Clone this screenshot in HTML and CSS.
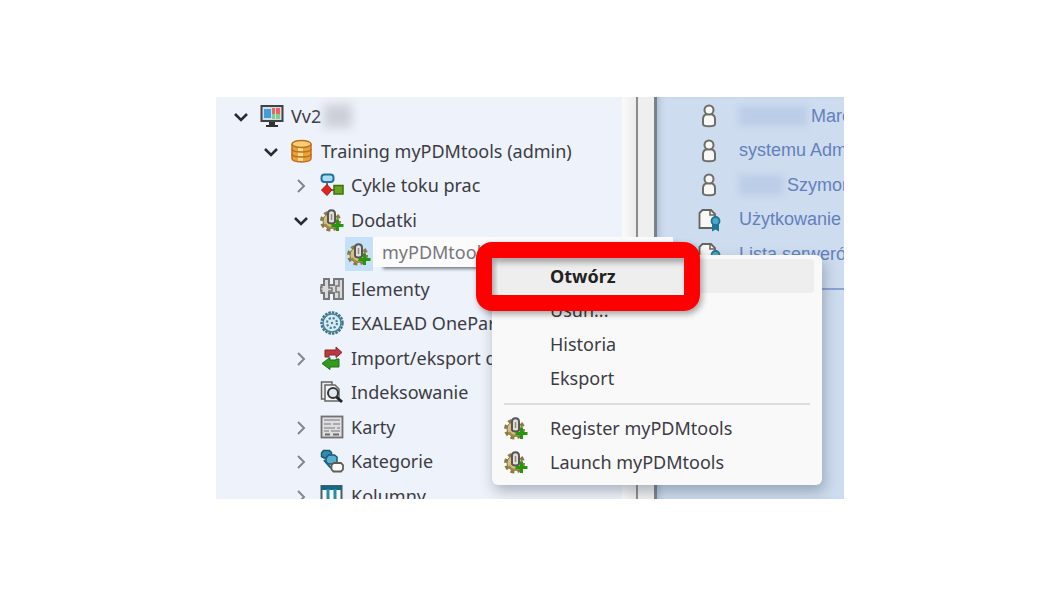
FILE: index.html
```html
<!DOCTYPE html>
<html lang="pl">
<head>
    <meta charset="UTF-8">
    <meta name="viewport" content="width=device-width, initial-scale=1.0">
    <title>myPDMtools</title>
    <link rel="stylesheet" href="styles.css">
</head>
<body>
    <!-- Icons -->
    <svg class="sprite" aria-hidden="true">
        <symbol id="open" viewBox="0 0 24 24"><path d="M6 10l6 6 6-6" fill="none" stroke="#2b2b33" stroke-width="2.6"/></symbol>
        <symbol id="closed" viewBox="0 0 24 24"><path d="M9 7l6 6-6 6" fill="none" stroke="#85858c" stroke-width="2"/></symbol>
        <symbol id="monitor" viewBox="0 0 24 24">
            <rect x="1.5" y="2" width="21" height="15" fill="#d5dde0" stroke="#3f4347" stroke-width="2"/>
            <rect x="4" y="5" width="7" height="9" fill="#3f9fdc"/>
            <rect x="12" y="4" width="8" height="6" fill="#ef6360"/>
            <rect x="12" y="10" width="8" height="5" fill="#7fd18a"/>
            <path d="M15 4h1v11h-1z" fill="#d5dde0"/>
            <path d="M9 18h6v3H9zM6 21h12v2H6z" fill="#2f3236"/>
        </symbol>
        <symbol id="database" viewBox="0 0 24 24">
            <path d="M2 5.5v14c0 4.500 19 4.500 19 0v-14z" fill="#e9a13a" stroke="#bd6f20" stroke-width="1.500"/>
            <path d="M8 8v14h5V8z" fill="#ffdc8c"/>
            <ellipse cx="11.500" cy="5" rx="9.500" ry="3.500" fill="#f8cf72" stroke="#bd6f20" stroke-width="1.500"/>
            <path d="M2 10c0 4 19 4 19 0M2 15c0 4 19 4 19 0" fill="none" stroke="#bd6f20" stroke-width="1.500"/>
        </symbol>
        <symbol id="workflow" viewBox="0 0 24 24">
            <path d="M7 8v9h10" fill="none" stroke="#444" stroke-width="1.500"/>
            <rect x="1.500" y="1.500" width="12" height="7.500" rx="3" fill="#a9dcf7" stroke="#24719c" stroke-width="2"/>
            <path d="M7 11.500l5 5.500-5 5.500L1.500 17z" fill="#e32222" stroke="#a91616"/>
            <rect x="14" y="12.500" width="9" height="8.500" fill="#67a51d" stroke="#3d6f10" stroke-width="1.500"/>
        </symbol>
        <symbol id="addin" viewBox="0 0 24 24">
            <circle cx="10.500" cy="13" r="8.500" fill="none" stroke="#8a7a45" stroke-width="4" stroke-dasharray="3.700 3"/>
            <circle cx="10.500" cy="13" r="7.500" fill="#d3c07a" stroke="#857747"/>
            <path d="M5 16c3 5 8 5 11 0" fill="none" stroke="#a08b45" stroke-width="2"/>
            <path d="M8 14V6c0-5 7-5 7 0v8c-1 2-6 2-7 0z" fill="#e3e0d6" stroke="#55555a" stroke-width="2"/>
            <path d="M11.500 6v6" stroke="#8b8b92" stroke-width="1.500"/>
            <path d="M17.500 11.500v11.500M11.500 17.500h12" stroke="#27960f" stroke-width="3"/>
        </symbol>
        <symbol id="elements" viewBox="0 0 24 24">
            <path d="M4 2h5v6h5V2h9v20h-9v-6H9v6H4v-6H1.500v-2.500H0v-3h1.500V8H4z" fill="#d9d9da" stroke="#77777a" stroke-width="2"/>
            <path d="M19 2v7h-3v6h3v7M9 8v3h3v3H9v2" fill="none" stroke="#77777a" stroke-width="1.500"/>
        </symbol>
        <symbol id="exalead" viewBox="0 0 24 24">
            <circle cx="12" cy="12" r="10.500" fill="none" stroke="#39738a" stroke-width="2.400" stroke-dasharray="2.500 1"/>
            <circle cx="12" cy="12" r="9" fill="#d8edf4" stroke="#4c8298" stroke-width="1.500"/>
            <circle cx="12" cy="12" r="5" fill="none" stroke="#4d8096" stroke-width="2.200" stroke-dasharray="2.200 1.727"/>
            <circle cx="12" cy="12" r="1.200" fill="#4d8096"/>
        </symbol>
        <symbol id="transfer" viewBox="0 0 24 24">
            <path d="M5 4h11V1l6 5.500-6 5V9H9v2H5z" fill="#b83a40" stroke="#8e2328"/>
            <path d="M19 13v8h-9v2.500L2 17.500l8-6V14h6v-1z" fill="#329b1f" stroke="#236f17"/>
        </symbol>
        <symbol id="index" viewBox="0 0 24 24">
            <path d="M5 19H1.500V2H12v3" fill="#ececec" stroke="#666" stroke-width="1.500"/>
            <path d="M5 20V5h10l4 4v12H5z" fill="#f5f5f5" stroke="#666" stroke-width="1.500"/>
            <circle cx="13" cy="13" r="5" fill="#dfe9ee" stroke="#37373a" stroke-width="2"/>
            <path d="M16.500 17l5.500 5" stroke="#242426" stroke-width="3"/>
        </symbol>
        <symbol id="card" viewBox="0 0 24 24">
            <rect x="1.500" y="1.500" width="21" height="21" fill="#dedede" stroke="#717174" stroke-width="1.800"/>
            <path d="M4 5h16M4 9h7M13 9h7M4 13h11M17 13h3M4 16h5M11 16h9" stroke="#9a9a9d" stroke-width="1.500"/>
            <path d="M5 19.500h5M13 19.500h6" stroke="#6b6b6e" stroke-width="2"/>
        </symbol>
        <symbol id="category" viewBox="0 0 24 24">
            <path d="M1.500 4l2-2.500h6l2 2V9H4L1.500 7.500z" fill="#3788ad" stroke="#195a79" stroke-width="1.500"/>
            <path d="M6 9l2.500-3h6l2.500 2v7H8.500L6 13z" fill="#5aaed2" stroke="#195a79" stroke-width="1.500"/>
            <path d="M4 11l7 8" stroke="#1d6789" stroke-width="2"/>
            <path d="M11.500 16.500l2-2.500H21l2 2v4.500L21 22.500h-7.500l-2-2z" fill="#fff" stroke="#5f5f54" stroke-width="1.800"/>
        </symbol>
        <symbol id="columns" viewBox="0 0 24 24">
            <rect x="1.500" y="2" width="20" height="22" fill="#f3fbff" stroke="#4d5b61" stroke-width="2"/>
            <path d="M1 4h21" stroke="#176683" stroke-width="4"/>
            <path d="M8 5v19M15 5v19" stroke="#3189a9" stroke-width="3"/>
        </symbol>
        <symbol id="user" viewBox="0 0 24 24">
            <path d="M6 20v-5c0-4 2-5 6-5s6 1 6 5v5c0 3-12 3-12 0z" fill="#f8f8f6" stroke="#6f6c69" stroke-width="2"/>
            <circle cx="12" cy="6" r="4.500" fill="#f8f8f6" stroke="#6f6c69" stroke-width="2"/>
        </symbol>
        <symbol id="license" viewBox="0 0 24 24">
            <path d="M2.500 5l3-3H14l4 4v14H2.500z" fill="#f8f8f6" stroke="#65625f" stroke-width="1.800"/>
            <path d="M13 2v5h5" fill="none" stroke="#65625f" stroke-width="1.500"/>
            <path d="M15 15h7v8.500l-3.500-2-3.500 2z" fill="#197898"/>
            <circle cx="18.500" cy="13" r="4" fill="#48a9ca" stroke="#25738f" stroke-width="1.800"/>
        </symbol>
    </svg>

    <main class="window">
        <nav class="tree-pane">
            <ul class="tree rows">
                <li class="node"><button class="toggle" aria-label="Zwiń"><svg><use href="#open"/></svg></button><svg class="icon"><use href="#monitor"/></svg><span>Vv2</span><i class="smudge smudge-gray"></i></li>
                <li class="node level-1"><button class="toggle" aria-label="Zwiń"><svg><use href="#open"/></svg></button><svg class="icon"><use href="#database"/></svg><span>Training myPDMtools (admin)</span></li>
                <li class="node level-2"><button class="toggle" aria-label="Rozwiń"><svg><use href="#closed"/></svg></button><svg class="icon"><use href="#workflow"/></svg><span>Cykle toku prac</span></li>
                <li class="node level-2"><button class="toggle" aria-label="Zwiń"><svg><use href="#open"/></svg></button><svg class="icon"><use href="#addin"/></svg><span>Dodatki</span></li>
                <li class="node level-3 selected"><svg class="icon"><use href="#addin"/></svg><span class="tip">myPDMtools</span></li>
                <li class="node level-2 leaf"><svg class="icon"><use href="#elements"/></svg><span>Elementy</span></li>
                <li class="node level-2 leaf"><svg class="icon"><use href="#exalead"/></svg><span>EXALEAD OnePart</span></li>
                <li class="node level-2"><button class="toggle" aria-label="Rozwiń"><svg><use href="#closed"/></svg></button><svg class="icon"><use href="#transfer"/></svg><span>Import/eksport danych</span></li>
                <li class="node level-2 leaf"><svg class="icon"><use href="#index"/></svg><span>Indeksowanie</span></li>
                <li class="node level-2"><button class="toggle" aria-label="Rozwiń"><svg><use href="#closed"/></svg></button><svg class="icon"><use href="#card"/></svg><span>Karty</span></li>
                <li class="node level-2"><button class="toggle" aria-label="Rozwiń"><svg><use href="#closed"/></svg></button><svg class="icon"><use href="#category"/></svg><span>Kategorie</span></li>
                <li class="node level-2"><button class="toggle" aria-label="Rozwiń"><svg><use href="#closed"/></svg></button><svg class="icon"><use href="#columns"/></svg><span>Kolumny</span></li>
            </ul>
        </nav>
        <div class="gutter"></div>
        <div class="splitter"></div>
        <section class="list-pane">
            <ul class="rows">
                <li class="entry"><svg class="icon"><use href="#user"/></svg><i class="smudge smudge-long"></i><a href="#">Marcin</a></li>
                <li class="entry"><svg class="icon"><use href="#user"/></svg><a href="#">systemu Administrator</a></li>
                <li class="entry"><svg class="icon"><use href="#user"/></svg><i class="smudge"></i><a href="#">Szymon</a></li>
                <li class="entry"><svg class="icon"><use href="#license"/></svg><a href="#">Użytkowanie licencji</a></li>
                <li class="entry"><svg class="icon"><use href="#license"/></svg><a href="#">Lista serwerów</a></li>
                <li class="divider"></li>
            </ul>
        </section>

        <!-- Context menu -->
        <div class="menu" role="menu">
            <button class="menu-item active" role="menuitem">Otwórz</button>
            <button class="menu-item" role="menuitem">Usuń...</button>
            <button class="menu-item" role="menuitem">Historia</button>
            <button class="menu-item" role="menuitem">Eksport</button>
            <hr class="menu-line">
            <button class="menu-item" role="menuitem"><svg class="icon"><use href="#addin"/></svg>Register myPDMtools</button>
            <button class="menu-item" role="menuitem"><svg class="icon"><use href="#addin"/></svg>Launch myPDMtools</button>
        </div>
        <div class="marker"></div>
    </main>
</body>
</html>
```
FILE: styles.css
```css
* {
    margin: 0;
    padding: 0;
    box-sizing: border-box;
}

body {
    height: 100vh;
    padding: 97px 216px;
    background: #fff;
    font-family: "Noto Sans", "Open Sans", sans-serif;
    font-size: 18px;
    color: #3c3c44;
}

button {
    border: 0;
    background: none;
    font: inherit;
    color: inherit;
}

ul {
    list-style: none;
}

.sprite {
    position: absolute;
    width: 0;
    height: 0;
}

.window {
    position: relative;
    display: flex;
    height: 100%;
    overflow: hidden;
}

/* Both panes share the same row grid, the last row runs out of view */
.rows {
    display: grid;
    grid-template-rows: repeat(12, 1fr);
    height: calc(100% + 14px);
    padding-top: 2px;
}

.icon {
    flex: none;
    width: 24px;
    height: 24px;
}

/* Tree */
.tree-pane {
    flex: 2 1 0;
    min-width: 0;
    background: #eef2fa;
}

.node {
    display: flex;
    align-items: center;
    gap: 7px;
    padding-left: 13px;
    white-space: nowrap;
}

.level-1 {
    padding-left: 43px;
}

.level-2 {
    padding-left: 73px;
}

.leaf {
    padding-left: 104px;
}

.level-3 {
    padding-left: 129px;
}

.toggle {
    flex: none;
    width: 24px;
    height: 24px;
}

.toggle svg {
    display: block;
    width: 24px;
    height: 24px;
}

.selected {
    gap: 0;
}

.selected .icon {
    width: 28px;
    height: 34px;
    padding: 5px 2px;
    background: #c5e0f8;
}

.tip {
    position: relative;
    z-index: 1;
    flex: none;
    align-self: flex-start;
    width: 300px;
    height: 30px;
    padding-left: 9px;
    line-height: 30px;
    background: #fbfbfb;
    color: #77777b;
    box-shadow: 8px 4px 3px -2px #74808c;
}

.smudge {
    flex: none;
    width: 44px;
    height: 20px;
    background: #bccde8;
    filter: blur(3px);
}

.smudge-gray {
    width: 28px;
    height: 24px;
    margin-left: -4px;
    background: #cdd0d8;
    filter: blur(5px);
}

.smudge-long {
    width: 68px;
}

/* Space between the panes */
.gutter {
    flex: none;
    width: 16px;
    background: linear-gradient(90deg, #fafafa, #ececec);
    border-right: 2px solid #8c8c8c;
}

.splitter {
    flex: none;
    width: 19px;
    background: #efefef;
    border-right: 3px solid #7b818c;
}

/* List */
.list-pane {
    flex: 0 1 187px;
    min-width: 0;
    overflow: hidden;
    background: #cddcee;
    box-shadow: inset 6px 0 6px -4px #a9b8cc;
    font-family: "Liberation Sans", Arial, sans-serif;
}

.entry {
    display: flex;
    align-items: center;
    gap: 4px;
    padding-left: 40px;
    white-space: nowrap;
}

.entry .icon {
    margin-right: 14px;
}

.entry a {
    color: #6580bd;
    text-decoration: none;
}

.divider {
    align-self: center;
    height: 2px;
    margin-left: 40px;
    background: #8ca2cf;
}

/* Context menu */
.menu {
    position: absolute;
    z-index: 2;
    top: 158px;
    left: 276px;
    width: 330px;
    padding: 4px 8px 6px;
    background: #f9f9f9;
    border-radius: 6px;
    box-shadow: 2px 6px 14px rgba(50, 60, 80, 0.35);
}

.menu-item {
    display: flex;
    align-items: center;
    width: 100%;
    height: 34px;
    padding-left: 50px;
    border-radius: 4px;
}

.menu-item .icon {
    margin-left: -46px;
    margin-right: 22px;
}

.menu-item.active {
    background: #eeeeee;
    color: #222;
    font-weight: 700;
}

.menu-line {
    height: 2px;
    margin: 8px 4px 6px;
    border: 0;
    background: #dcdcdc;
}

.marker {
    position: absolute;
    z-index: 3;
    top: 145px;
    left: 260px;
    width: 224px;
    height: 69px;
    border: 16px solid #fe0000;
    border-radius: 16px;
    box-shadow: 2px 3px 6px rgba(0, 0, 0, 0.35), inset 3px 4px 6px rgba(0, 0, 0, 0.35);
    pointer-events: none;
}
```
